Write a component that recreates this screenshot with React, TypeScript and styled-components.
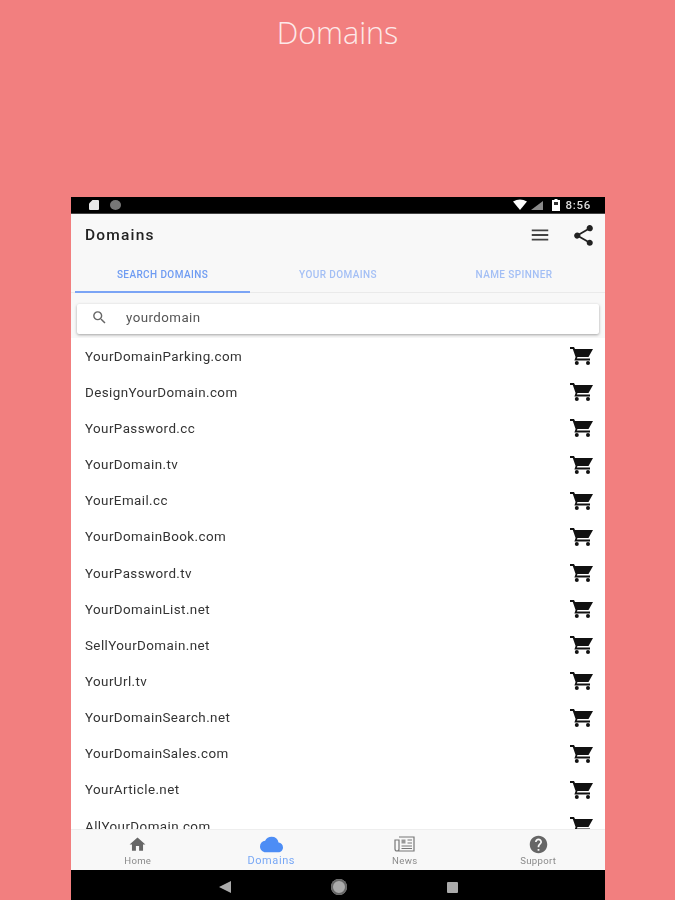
import React, { useState } from "react";
import styled, { createGlobalStyle } from "styled-components";
import { MdCloud, MdHelp, MdHome, MdMenu, MdSearch, MdShare } from "react-icons/md";

const domains = [
  "YourDomainParking.com",
  "DesignYourDomain.com",
  "YourPassword.cc",
  "YourDomain.tv",
  "YourEmail.cc",
  "YourDomainBook.com",
  "YourPassword.tv",
  "YourDomainList.net",
  "SellYourDomain.net",
  "YourUrl.tv",
  "YourDomainSearch.net",
  "YourDomainSales.com",
  "YourArticle.net",
  "AllYourDomain.com",
];

const tabs = ["SEARCH DOMAINS", "YOUR DOMAINS", "NAME SPINNER"];

// solid basket cart, flatter than the stock material one
const CartIcon = () => (
  <svg width="23" height="18" viewBox="0 0 23 18" fill="#111">
    <path d="M0 0 H4 L5 2 H23 L18.5 10 H7.5 L6.8 11.6 H20 V13.4 H4.4 L5.6 10 L2.8 2 H0 Z" />
    <circle cx="6.8" cy="16" r="2" />
    <circle cx="18" cy="16" r="2" />
  </svg>
);

const NewsIcon = () => (
  <svg width="21" height="16" viewBox="0 0 21 16" fill="none" stroke="#777" strokeWidth="1.2">
    <path d="M5 1 H20 V15 H3 Q1 15 1 13 V4 H5 V13 Q5 15 3 15" />
    <rect x="7.5" y="3.5" width="4" height="4" fill="#999" stroke="none" />
    <path d="M13.5 4 H18 M13.5 7 H18 M7.5 10 H18 M7.5 12.5 H18" />
  </svg>
);

const navItems = [
  { label: "Home", icon: <MdHome size={19} /> },
  { label: "Domains", icon: <MdCloud size={23} /> },
  { label: "News", icon: <NewsIcon /> },
  { label: "Support", icon: <MdHelp size={21} /> },
];

export default function App() {
  const [activeTab] = useState(0);

  return (
    <Page>
      <GlobalStyle />
      <Title>Domains</Title>
      <Phone>
        <StatusBar>
          <StatusGroup>
            <SimIcon />
            <DotIcon />
          </StatusGroup>
          <StatusGroup>
            <svg width="33" height="12" viewBox="0 0 33 12">
              <path d="M0 2.5 Q7 -1.5 14 2.5 L7 11 Z" fill="#fff" />
              <path d="M18 11 L30 2 V11 Z" fill="#8a8a8a" />
            </svg>
            <svg width="8" height="12" viewBox="0 0 8 12">
              <path d="M2.5 0 H5.5 V1 H8 V12 H0 V1 H2.5 Z" fill="#fff" />
              <rect x="2" y="3" width="4" height="3" fill="#333" />
            </svg>
            <Clock>8:56</Clock>
          </StatusGroup>
        </StatusBar>
        <Header>
          <HeaderTitle>Domains</HeaderTitle>
          <HeaderActions>
            <MdMenu size={22} color="#444" />
            <MdShare size={25} color="#222" />
          </HeaderActions>
        </Header>
        <Tabs>
          {tabs.map((tab, index) => (
            <Tab key={tab} $active={index === activeTab}>
              {tab}
            </Tab>
          ))}
        </Tabs>
        <SearchArea>
          <SearchBox>
            <MdSearch size={17} color="#666" />
            <SearchText>yourdomain</SearchText>
          </SearchBox>
        </SearchArea>
        <List>
          {domains.map((domain) => (
            <Row key={domain}>
              <RowText>{domain}</RowText>
              <CartIcon />
            </Row>
          ))}
        </List>
        <BottomNav>
          {navItems.map((item) => (
            <NavItem key={item.label} $active={item.label === "Domains"}>
              <NavIcon>{item.icon}</NavIcon>
              <NavLabel $active={item.label === "Domains"}>{item.label}</NavLabel>
            </NavItem>
          ))}
        </BottomNav>
        <SystemBar>
          <svg width="12" height="12" viewBox="0 0 12 12">
            <path d="M0 6 L12 0 V12 Z" fill="#aaa" />
          </svg>
          <HomeDot />
          <RecentSquare />
        </SystemBar>
      </Phone>
    </Page>
  );
}

const GlobalStyle = createGlobalStyle`
  html, body {
    margin: 0;
    padding: 0;
    background: #f27f7f;
  }
`;

const Page = styled.div`
  width: 675px;
  height: 900px;
  overflow: hidden;
  display: flex;
  flex-direction: column;
  align-items: center;
  background: #f27f7f;
  font-family: Roboto, "Liberation Sans", sans-serif;
`;

const Title = styled.h1`
  margin: 0;
  height: 197px;
  padding-top: 10px;
  box-sizing: border-box;
  font-family: "Open Sans", "Liberation Sans", sans-serif;
  font-size: 30.5px;
  line-height: 44px;
  font-weight: 300;
  color: #fde9e9;
`;

const Phone = styled.div`
  width: 534px;
  height: 703px;
  margin-left: 1px;
  display: flex;
  flex-direction: column;
  background: #fff;
  filter: blur(0.5px);
`;

const StatusBar = styled.div`
  height: 17px;
  flex: none;
  display: flex;
  align-items: center;
  justify-content: space-between;
  padding: 0 14px 0 18px;
  background: #000;
  border-bottom: 1px solid #444;
  box-sizing: border-box;
`;

const StatusGroup = styled.div`
  display: flex;
  align-items: center;
  gap: 6px;
`;

const SimIcon = styled.div`
  width: 10px;
  height: 10px;
  background: #e8e8e8;
  border-radius: 1px;
  clip-path: polygon(35% 0, 100% 0, 100% 100%, 0 100%, 0 35%);
`;

const DotIcon = styled.div`
  width: 11px;
  height: 10px;
  margin-left: 5px;
  background: #777;
  border-radius: 50%;
`;

const Clock = styled.span`
  color: #ddd;
  font-size: 11.5px;
  font-weight: 500;
  letter-spacing: 0.7px;
`;

const Header = styled.div`
  height: 44px;
  flex: none;
  display: flex;
  align-items: center;
  justify-content: space-between;
  padding: 0 19px 2px 14px;
  background: #f8f8f8;
  box-sizing: border-box;
`;

const HeaderTitle = styled.div`
  font-size: 15.5px;
  font-weight: 500;
  letter-spacing: 1.2px;
  color: #222;
`;

const HeaderActions = styled.div`
  display: flex;
  align-items: center;
  gap: 20px;
  margin-right: -10px;
`;

const Tabs = styled.div`
  height: 35px;
  flex: none;
  display: grid;
  grid-template-columns: 175px 176px 176px;
  padding-left: 4px;
  background: #f8f8f8;
  border-bottom: 1px solid #eaeaea;
  box-sizing: border-box;
`;

const Tab = styled.div<{ $active: boolean }>`
  display: flex;
  align-items: center;
  justify-content: center;
  font-size: 10px;
  font-weight: 500;
  letter-spacing: 0.4px;
  color: ${(p) => (p.$active ? "#6f9cf2" : "#a3bff5")};
  border-bottom: 2px solid ${(p) => (p.$active ? "#7ba4f5" : "transparent")};
  margin-bottom: -1px;
`;

const SearchArea = styled.div`
  height: 46px;
  flex: none;
  padding: 11px 6px 5px;
  background: #f8f8f8;
  border-bottom: 1px solid #e6e6e6;
  box-sizing: border-box;
`;

const SearchBox = styled.div`
  height: 30px;
  display: flex;
  align-items: center;
  padding: 0 0 3px 14px;
  gap: 18px;
  background: #fff;
  border-radius: 2px;
  box-shadow: 0 1px 3px rgba(0, 0, 0, 0.35);
  box-sizing: border-box;
`;

const SearchText = styled.span`
  font-size: 13.3px;
  letter-spacing: 0.45px;
  color: #555;
`;

const List = styled.div`
  flex: 1;
  min-height: 0;
  overflow: hidden;
  background: #fff;
  margin-top: -1px;
`;

const Row = styled.div`
  height: 36.17px;
  display: flex;
  align-items: center;
  justify-content: space-between;
  padding: 0 12px 0 14px;
  box-sizing: border-box;
`;

const RowText = styled.span`
  font-size: 13.4px;
  letter-spacing: 0.42px;
  color: #333;
`;

const BottomNav = styled.div`
  height: 41px;
  flex: none;
  display: grid;
  grid-template-columns: repeat(4, 1fr);
  padding-top: 3px;
  background: #f8f8f8;
  border-top: 1px solid #eee;
  box-sizing: border-box;
`;

const NavItem = styled.div<{ $active: boolean }>`
  display: flex;
  flex-direction: column;
  align-items: center;
  color: ${(p) => (p.$active ? "#4d8df5" : "#666")};
`;

const NavIcon = styled.div`
  height: 22px;
  display: flex;
  align-items: center;
  justify-content: center;
`;

const NavLabel = styled.span<{ $active: boolean }>`
  font-size: ${(p) => (p.$active ? "11px" : "9.6px")};
  line-height: 11px;
  letter-spacing: ${(p) => (p.$active ? "0.6px" : "0.3px")};
  opacity: 0.75;
`;

const SystemBar = styled.div`
  height: 30px;
  flex: none;
  display: flex;
  align-items: center;
  justify-content: center;
  gap: 100px;
  padding-top: 4px;
  box-sizing: border-box;
  background: #000;
`;

const HomeDot = styled.div`
  width: 16px;
  height: 16px;
  border-radius: 50%;
  background: #aaa;
  box-shadow: inset 0 0 0 2px #666;
`;

const RecentSquare = styled.div`
  width: 11px;
  height: 11px;
  background: #aaa;
  border-radius: 1px;
`;
